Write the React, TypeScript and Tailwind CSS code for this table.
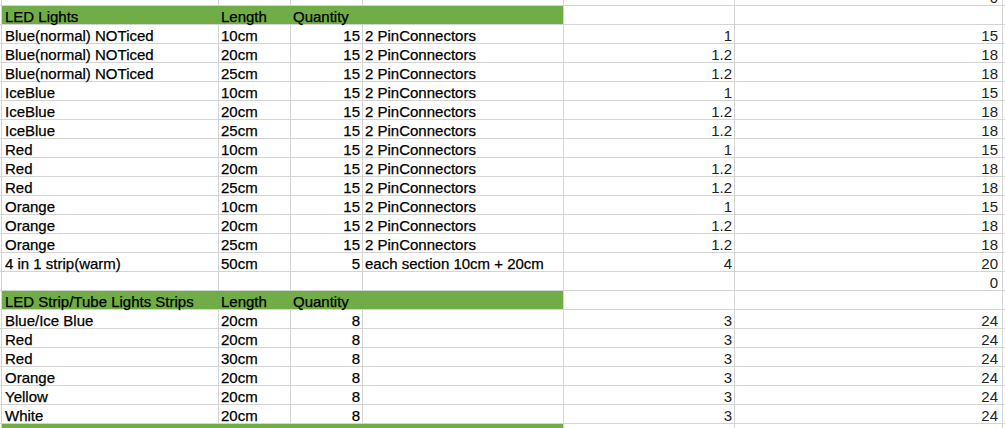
import React from "react";

type Row = {
  a?: string;
  b?: string;
  c?: string;
  d?: string;
  e?: string;
  f?: string;
  head?: boolean;
};

const section1: Row[] = [
  ["Blue(normal) NOTiced", "10cm", "1", "15"],
  ["Blue(normal) NOTiced", "20cm", "1.2", "18"],
  ["Blue(normal) NOTiced", "25cm", "1.2", "18"],
  ["IceBlue", "10cm", "1", "15"],
  ["IceBlue", "20cm", "1.2", "18"],
  ["IceBlue", "25cm", "1.2", "18"],
  ["Red", "10cm", "1", "15"],
  ["Red", "20cm", "1.2", "18"],
  ["Red", "25cm", "1.2", "18"],
  ["Orange", "10cm", "1", "15"],
  ["Orange", "20cm", "1.2", "18"],
  ["Orange", "25cm", "1.2", "18"],
].map(([a, b, e, f]) => ({ a, b, c: "15", d: "2 PinConnectors", e, f }));

const section2: Row[] = [
  ["Blue/Ice Blue", "20cm"],
  ["Red", "20cm"],
  ["Red", "30cm"],
  ["Orange", "20cm"],
  ["Yellow", "20cm"],
  ["White", "20cm"],
].map(([a, b]) => ({ a, b, c: "8", e: "3", f: "24" }));

const rows: Row[] = [
  { f: "0" },
  { a: "LED Lights", b: "Length", c: "Quantity", head: true },
  ...section1,
  { a: "4 in 1 strip(warm)", b: "50cm", c: "5", d: "each section 10cm + 20cm", e: "4", f: "20" },
  { f: "0" },
  { a: "LED Strip/Tube Lights Strips", b: "Length", c: "Quantity", head: true },
  ...section2,
  { head: true },
];

// column text roughly like the sheet's DengXian, a touch heavier than plain Arial
const txt =
  "font-['Liberation_Sans',Arial,sans-serif] text-[15px] leading-[22px] text-black whitespace-nowrap [-webkit-text-stroke:0.25px_#000]";
const num =
  "font-['Liberation_Sans',Arial,sans-serif] text-[15px] leading-[22px] text-[#222] whitespace-nowrap text-right";

function SheetRow({ row }: { row: Row }) {
  const g = row.head;
  const fill = g ? "bg-[#70ad47] border-[#70ad47]" : "border-[#d4d4d4]";
  return (
    <div className="flex h-[19px] border-b border-[#d4d4d4]">
      <div className="w-[2px] shrink-0 border-r border-[#d4d4d4]" />
      <div className={`w-[217px] shrink-0 border-r pl-[3px] ${fill} ${txt}`}>{row.a}</div>
      <div className={`w-[72px] shrink-0 border-r pl-[2px] ${fill} ${txt}`}>{row.b}</div>
      <div
        className={`w-[72px] shrink-0 border-r ${fill} ${txt} ${
          g ? "pl-[2px]" : "text-right pr-[2px]"
        }`}
      >
        {row.c}
      </div>
      <div className={`w-[201px] shrink-0 border-r border-[#d4d4d4] pl-[2px] ${g ? "bg-[#70ad47]" : ""} ${txt}`}>
        {row.d}
      </div>
      <div className={`w-[171px] shrink-0 border-r border-[#d4d4d4] pr-[2px] ${num}`}>{row.e}</div>
      <div className={`w-[268px] shrink-0 border-r border-[#d4d4d4] pr-[4px] ${num}`}>{row.f}</div>
      <div className="flex-1" />
    </div>
  );
}

export default function App() {
  return (
    <div className="w-[1005px] h-[428px] overflow-hidden bg-white">
      <div className="-mt-[13px]">
        {rows.map((r, i) => (
          <SheetRow key={i} row={r} />
        ))}
      </div>
    </div>
  );
}
